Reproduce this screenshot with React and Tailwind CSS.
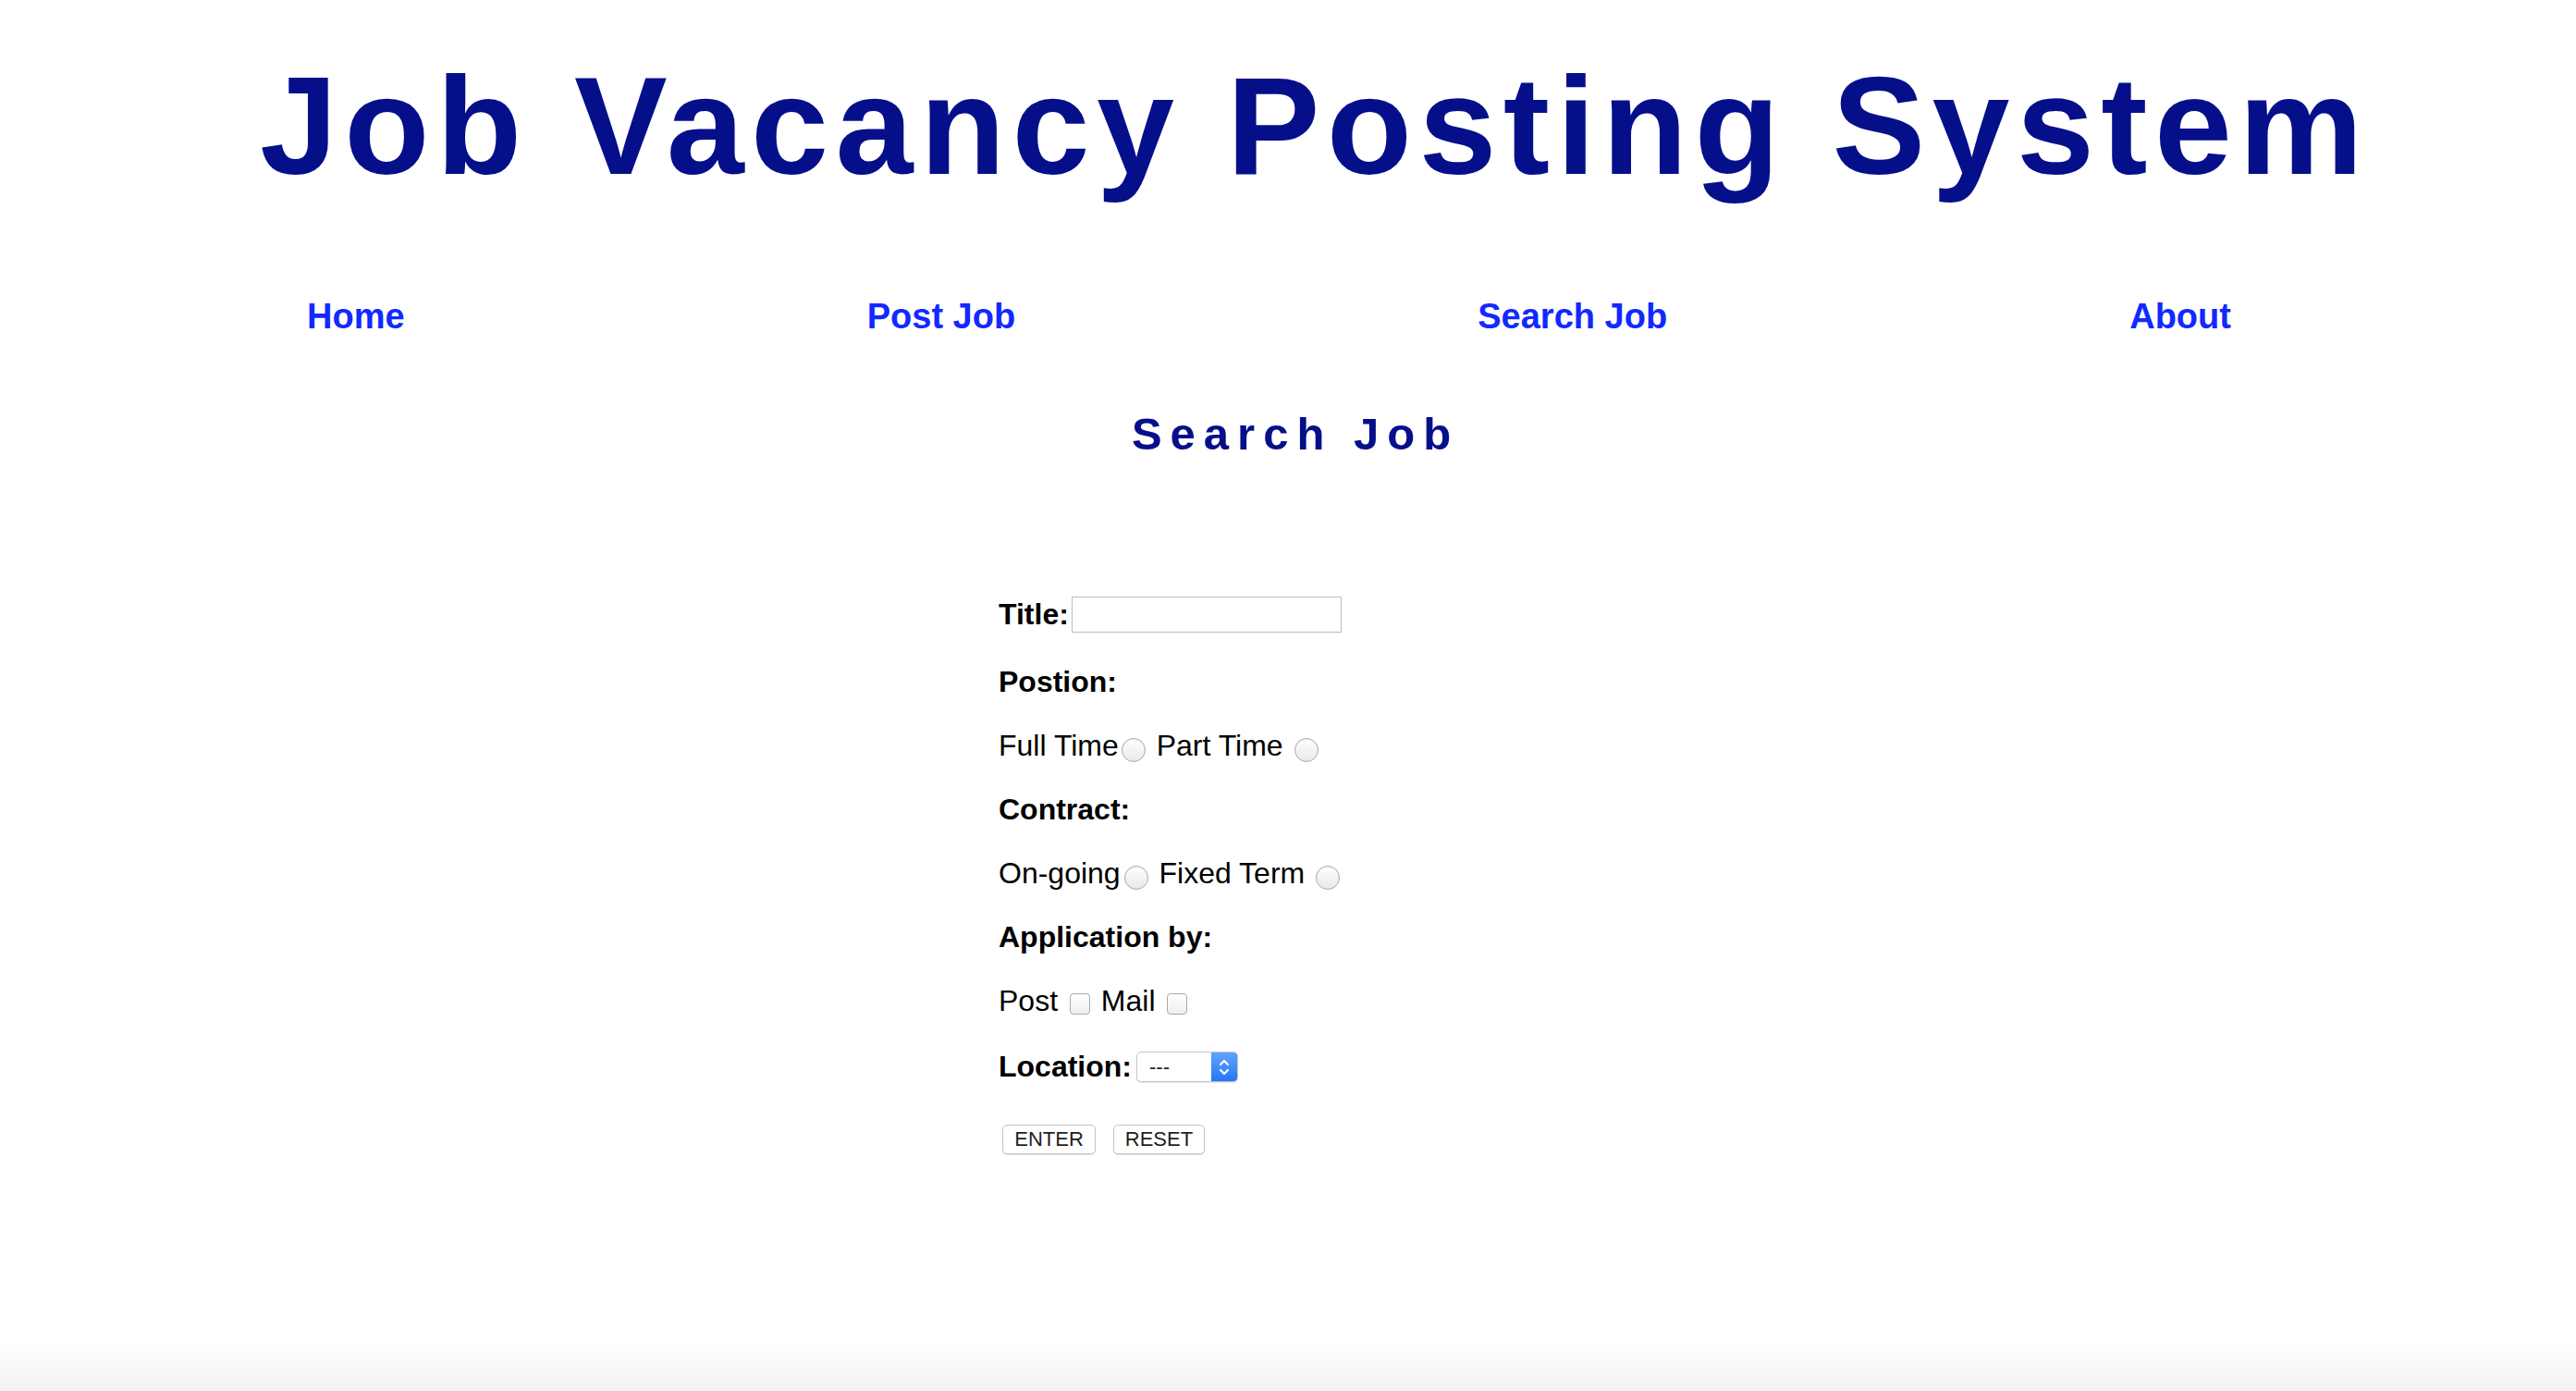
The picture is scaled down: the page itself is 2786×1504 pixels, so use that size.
import { useState } from "react";

const navLinks = ["Home", "Post Job", "Search Job", "About"];

const Radio = ({ name, className = "" }) => (
  <input
    type="radio"
    name={name}
    className={`appearance-none inline-block w-[26px] h-[26px] rounded-full border border-[#a9a9a9] bg-linear-to-b from-white to-[#e9e9e9] shadow-[inset_0_1px_1px_rgba(0,0,0,0.06)] align-[-7px] ${className}`}
  />
);

const Checkbox = ({ className = "" }) => (
  <input
    type="checkbox"
    className={`appearance-none inline-block w-[22px] h-[23px] rounded-[4px] border border-[#a9a9a9] bg-linear-to-b from-white to-[#eeeeee] align-[-4px] ${className}`}
  />
);

const SelectBox = () => (
  <div className="ml-[5px] flex h-[33px] w-[110px] overflow-hidden rounded-[5px] border border-[#c6c6c6] bg-white shadow-[0_1px_1px_rgba(0,0,0,0.1)]">
    <div className="flex flex-1 items-center pl-[13px] text-[22px] leading-none text-[#222]">---</div>
    <div className="flex w-[28px] items-center justify-center bg-linear-to-b from-[#5ea3ff] to-[#2377f5]">
      <svg width="14" height="22" viewBox="0 0 14 22" fill="none" stroke="white" strokeWidth="2.2" strokeLinecap="round" strokeLinejoin="round">
        <path d="M3 8 L7 4 L11 8" />
        <path d="M3 14 L7 18 L11 14" />
      </svg>
    </div>
  </div>
);

export default function App() {
  const [title, setTitle] = useState("");

  return (
    <div className="min-h-screen flex flex-col bg-white font-['Liberation_Sans',Arial,sans-serif]">
      <div className="pt-[49px]">
        <h1 className="pl-[58px] text-center whitespace-nowrap text-[151px] leading-[174px] font-bold tracking-[7.4px] text-[#050f8a]">
          Job Vacancy Posting System
        </h1>

        <nav className="mt-[97px] flex justify-around pl-[82px] pr-[123px] text-[38px] leading-[44px] font-bold text-[#1129ff]">
          {navLinks.map((link) => (
            <a key={link} href="#" className="whitespace-nowrap">
              {link}
            </a>
          ))}
        </nav>

        <h2 className="mt-[77px] pl-[16px] text-center whitespace-nowrap text-[49px] leading-[56px] font-bold tracking-[9px] text-[#050f8a]">
          Search Job
        </h2>

        <form className="mt-[148px] mx-auto w-[626px] text-[32px] text-black">
          <div className="flex h-[39px] items-center">
            <label className="font-bold leading-[37px]">Title:</label>
            <input
              type="text"
              value={title}
              onChange={(e) => setTitle(e.target.value)}
              className="ml-[3px] h-[39px] w-[292px] border border-[#bdbdbd] bg-white px-2 text-[24px] outline-none"
            />
          </div>

          <div className="mt-[35px] h-[37px] leading-[37px] font-bold">Postion:</div>

          <div className="mt-[32px] h-[37px] leading-[37px] whitespace-nowrap">
            Full Time<Radio name="position" className="ml-[3px] mr-[3px]" /> Part Time <Radio name="position" className="ml-[3px]" />
          </div>

          <div className="mt-[32px] h-[37px] leading-[37px] font-bold">Contract:</div>

          <div className="mt-[32px] h-[37px] leading-[37px] whitespace-nowrap">
            On-going<Radio name="contract" className="ml-[4px] mr-[3px]" /> Fixed Term <Radio name="contract" className="ml-[3px]" />
          </div>

          <div className="mt-[32px] h-[37px] leading-[37px] font-bold">Application by:</div>

          <div className="mt-[32px] h-[37px] leading-[37px] whitespace-nowrap">
            Post <Checkbox className="ml-[4px] mr-[3px]" /> Mail <Checkbox className="ml-[4px]" />
          </div>

          <div className="mt-[34px] flex h-[37px] items-center">
            <label className="font-bold leading-[37px]">Location:</label>
            <SelectBox />
          </div>

          <div className="mt-[44px] ml-[4px] flex gap-[19px]">
            <button type="button" className="h-[32px] w-[101px] rounded-[5px] border border-[#c4c4c4] bg-white text-[22px] leading-none text-[#1e1e1e] shadow-[0_1px_1px_rgba(0,0,0,0.12)]">
              ENTER
            </button>
            <button type="reset" className="h-[32px] w-[99px] rounded-[5px] border border-[#c4c4c4] bg-white text-[22px] leading-none text-[#1e1e1e] shadow-[0_1px_1px_rgba(0,0,0,0.12)]">
              RESET
            </button>
          </div>
        </form>
      </div>

      <div className="mt-auto h-[57px] bg-linear-to-b from-white to-[#f2f2f2]" />
    </div>
  );
}
